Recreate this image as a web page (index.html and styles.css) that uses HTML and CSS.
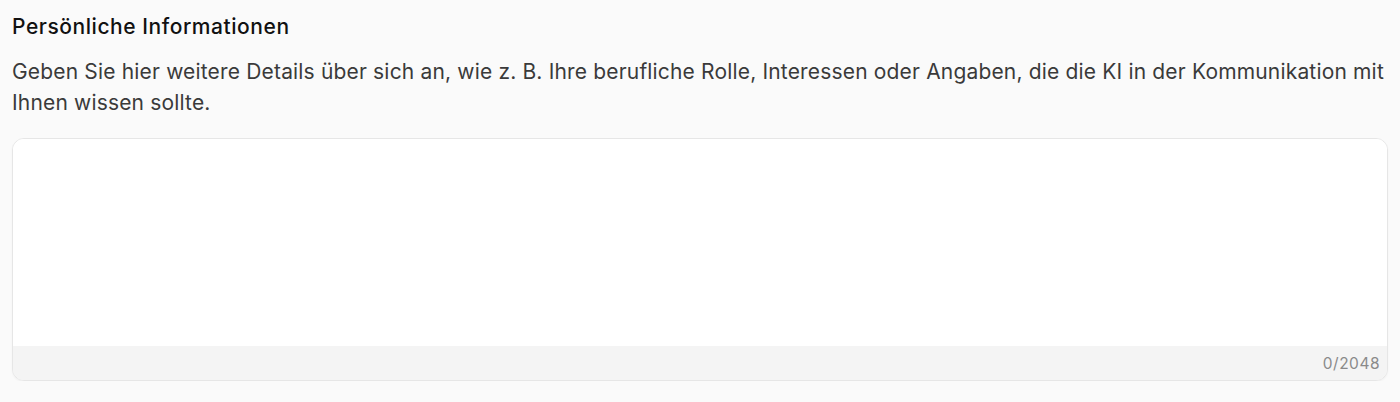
FILE: index.html
```html
<!DOCTYPE html>
<html lang="de">
<head>
<meta charset="utf-8">
<link rel="stylesheet" href="styles.css">
</head>
<body>
<section class="section">
  <h2 class="title">Persönliche Informationen</h2>
  <p class="desc">Geben Sie hier weitere Details über sich an, wie z. B. Ihre berufliche Rolle, Interessen oder Angaben, die die KI in der Kommunikation mit Ihnen wissen sollte.</p>
  <div class="field">
    <textarea class="input"></textarea>
    <div class="footer"><span class="count">0/2048</span></div>
  </div>
</section>
</body>
</html>
```
FILE: styles.css
```css
html, body {
  margin: 0;
  background: #fafafa;
}
body {
  font-family: Inter, "Noto Sans", sans-serif;
  color: #1a1a1a;
}
.section {
  padding: 13px 12px 0 12px;
  display: flex;
  flex-direction: column;
}
.title {
  margin: 0;
  font-size: 21px;
  line-height: 28px;
  font-weight: 500;
  color: #111;
  letter-spacing: 0.55px;
}
.desc {
  margin: 15px 0 0 0;
  font-size: 21px;
  line-height: 31px;
  color: #3a3a3a;
  letter-spacing: 0.17px;
}
.field {
  margin-top: 20px;
  border: 1px solid #e6e6e6;
  border-radius: 12px;
  background: #fff;
  overflow: hidden;
  display: flex;
  flex-direction: column;
  box-shadow: 0 1px 2px rgba(0,0,0,0.04);
}
.input {
  box-sizing: border-box;
  border: none;
  outline: none;
  resize: none;
  height: 207px;
  padding: 12px;
  font: inherit;
  background: #fff;
}
.footer {
  height: 34px;
  background: #f4f4f4;
  display: flex;
  align-items: flex-end;
  justify-content: flex-end;
  padding: 0 7px 7px 0;
  box-sizing: border-box;
}
.count {
  font-size: 15.5px;
  line-height: 18px;
  color: #8a8a8a;
  letter-spacing: 0.5px;
}
```
